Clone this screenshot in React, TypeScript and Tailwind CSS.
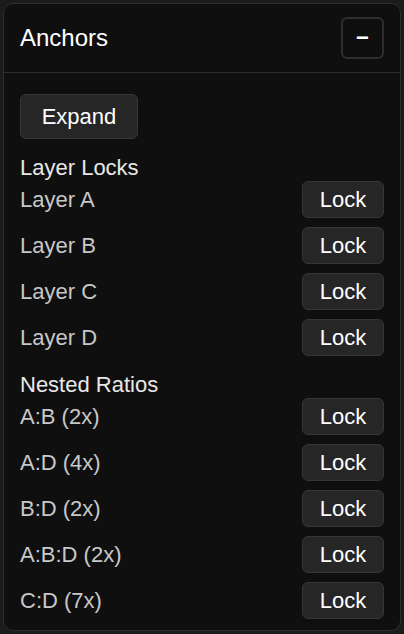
const layers = ['Layer A', 'Layer B', 'Layer C', 'Layer D'];
const ratios = ['A:B (2x)', 'A:D (4x)', 'B:D (2x)', 'A:B:D (2x)', 'C:D (7x)'];

const LockRow = ({ label }: { label: string }) => (
  <div className="flex h-[37px] items-center justify-between">
    <span className="text-[22px] text-[#c8c8c8]">{label}</span>
    <button className="h-[37px] w-[82px] rounded-[6px] border border-[#363636] bg-[#262626] text-[22px] text-white">
      Lock
    </button>
  </div>
);

const App = () => {
  return (
    <div className="min-h-[634px] bg-[#1b1b1b] p-[3px] font-['Liberation_Sans',Arial,sans-serif]">
      <div className="h-[628px] overflow-hidden rounded-[10px] border border-[#2e2e2e] bg-[#0f0f0f]">
        <div className="flex h-[69px] items-center justify-between border-b border-[#2e2e2e] px-4">
          <h2 className="text-[24px] text-white">Anchors</h2>
          <button className="flex h-[42px] w-[43px] items-center justify-center rounded-[6px] border-2 border-[#2e2e2e] text-[22px] font-bold leading-none text-white">
            −
          </button>
        </div>
        <div className="flex flex-col px-4 pt-[21px]">
          <div>
            <button className="h-[45px] w-[118px] rounded-[6px] border border-[#383838] bg-[#262626] text-[22px] text-white">
              Expand
            </button>
          </div>
          <h3 className="mt-4 text-[22px] leading-[26px] text-[#e8e8e8]">Layer Locks</h3>
          <div className="flex flex-col gap-[9px]">
            {layers.map((l) => (
              <LockRow key={l} label={l} />
            ))}
          </div>
          <h3 className="mt-4 text-[22px] leading-[26px] text-[#e8e8e8]">Nested Ratios</h3>
          <div className="flex flex-col gap-[9px]">
            {ratios.map((r) => (
              <LockRow key={r} label={r} />
            ))}
          </div>
        </div>
      </div>
    </div>
  );
};

export default App;
